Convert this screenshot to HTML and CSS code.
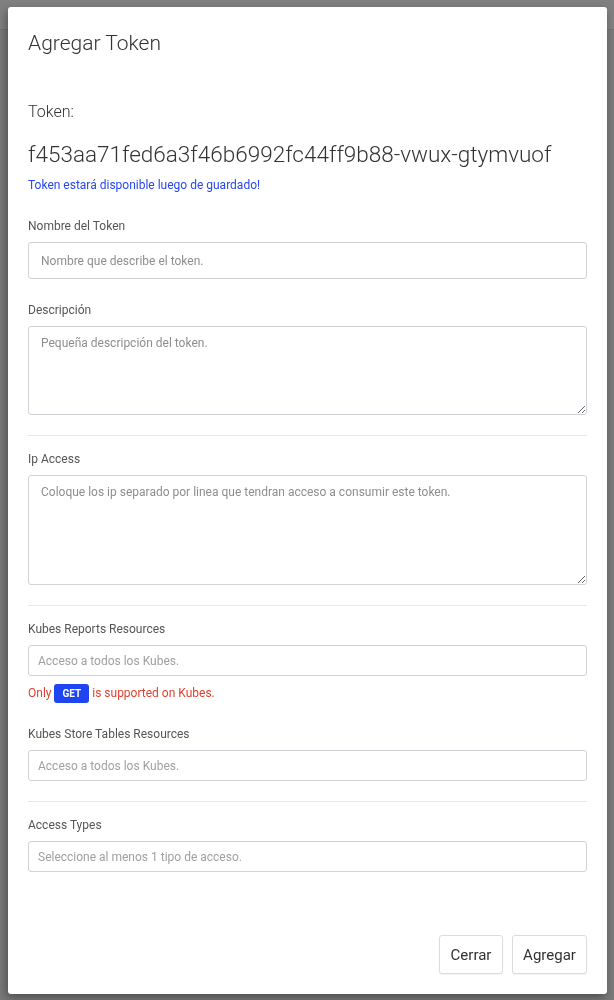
FILE: index.html
```html
<!DOCTYPE html>
<html lang="es">
<head>
<meta charset="utf-8">
<title>Agregar Token</title>
<link rel="stylesheet" href="styles.css">
</head>
<body>
<div class="page-bar"></div>
<div class="modal">
  <div class="modal-header">
    <h4 class="modal-title">Agregar Token</h4>
  </div>
  <div class="modal-body">
    <div class="token-label">Token:</div>
    <div class="token-value">f453aa71fed6a3f46b6992fc44ff9b88-vwux-gtymvuof</div>
    <div class="token-note">Token estará disponible luego de guardado!</div>

    <div class="field first">
      <label class="field-label">Nombre del Token</label>
      <input class="control control-lg" type="text" placeholder="Nombre que describe el token.">
    </div>
    <div class="field">
      <label class="field-label">Descripción</label>
      <textarea class="control area-sm" placeholder="Pequeña descripción del token."></textarea>
    </div>
    <hr class="divider">
    <div class="field">
      <label class="field-label">Ip Access</label>
      <textarea class="control area-lg" placeholder="Coloque los ip separado por linea que tendran acceso a consumir este token."></textarea>
    </div>
    <hr class="divider">
    <div class="field">
      <label class="field-label">Kubes Reports Resources</label>
      <input class="control control-sm" type="text" placeholder="Acceso a todos los Kubes.">
      <div class="help">Only <span class="badge">GET</span> is supported on Kubes.</div>
    </div>
    <div class="field">
      <label class="field-label">Kubes Store Tables Resources</label>
      <input class="control control-sm" type="text" placeholder="Acceso a todos los Kubes.">
    </div>
    <hr class="divider">
    <div class="field">
      <label class="field-label">Access Types</label>
      <input class="control control-sm" type="text" placeholder="Seleccione al menos 1 tipo de acceso.">
    </div>
  </div>
  <div class="modal-footer">
    <button class="btn btn-close" type="button">Cerrar</button>
    <button class="btn btn-add" type="button">Agregar</button>
  </div>
</div>
</body>
</html>
```
FILE: styles.css
```css
* { box-sizing: border-box; }

html, body {
  margin: 0;
  padding: 0;
  height: 100%;
}

body {
  background: #7a7a7a;
  font-family: Roboto, "Noto Sans", "Liberation Sans", sans-serif;
  color: #555;
  overflow: hidden;
}

.page-bar {
  height: 30px;
  background: #808080;
  border-bottom: 1px solid #727272;
}

.modal {
  position: fixed;
  top: 7px;
  left: 8px;
  width: 599px;
  height: 987px;
  background: #fff;
  border-radius: 3px;
  box-shadow: -2px 4px 10px rgba(0, 0, 0, 0.35);
  display: flex;
  flex-direction: column;
}

.modal-header {
  padding: 23px 20px 0;
}

.modal-title {
  margin: 0;
  font-size: 21px;
  line-height: 26px;
  font-weight: 300;
  color: #333;
}

.modal-body {
  padding: 46px 20px 0;
  display: flex;
  flex-direction: column;
}

.token-label {
  font-size: 16px;
  line-height: 20px;
  color: #333;
  font-weight: 300;
}

.token-value {
  margin-top: 19px;
  font-size: 22.5px;
  line-height: 26px;
  color: #333;
  font-weight: 300;
}

.token-note {
  margin-top: 10px;
  font-size: 12px;
  line-height: 16px;
  color: #2747f2;
}

.field {
  display: flex;
  flex-direction: column;
  gap: 8px;
  margin-top: 23px;
}

.field.first {
  margin-top: 25px;
}

.divider + .field {
  margin-top: 0;
}

.field-label {
  font-size: 12px;
  line-height: 16px;
  color: #555;
}

.control {
  display: block;
  width: 100%;
  margin: 0;
  border: 1px solid #cfd2d6;
  border-radius: 3px;
  background: #fff;
  font-family: Roboto, "Noto Sans", "Liberation Sans", sans-serif;
  font-size: 12px;
  color: #555;
  outline: none;
}

.control::placeholder {
  color: #8e8e8e;
}

.control-lg {
  height: 37px;
  padding: 0 12px;
}

.control-sm {
  height: 31px;
  padding: 0 9px;
}

.control-sm::placeholder {
  color: #a0a0a0;
}

textarea.control {
  padding: 8px 12px;
  line-height: 16px;
  resize: vertical;
}

.area-sm { height: 89px; }
.area-lg { height: 110px; }

.divider {
  border: 0;
  border-top: 1px solid #e6e6e6;
  margin: 20px 0 15px;
  height: 0;
}

.help {
  font-size: 12px;
  line-height: 19px;
  color: #e0412f;
  display: flex;
  align-items: center;
  gap: 3px;
}

.badge {
  display: inline-block;
  background: #1f45f2;
  color: #fff;
  font-weight: 700;
  font-size: 10px;
  line-height: 19px;
  height: 19px;
  padding: 0 8px;
  border-radius: 3px;
}

.modal-footer {
  margin-top: auto;
  padding: 0 20px 20px;
  display: flex;
  justify-content: flex-end;
  gap: 9px;
}

.btn {
  height: 39px;
  background: #fff;
  border: 1px solid #dcdcdc;
  border-radius: 3px;
  box-shadow: 0 1px 1px rgba(0, 0, 0, 0.05);
  font-family: Roboto, "Noto Sans", "Liberation Sans", sans-serif;
  font-size: 15px;
  color: #333;
  padding: 0;
}

.btn-close { width: 64px; }
.btn-add { width: 75px; }
```
